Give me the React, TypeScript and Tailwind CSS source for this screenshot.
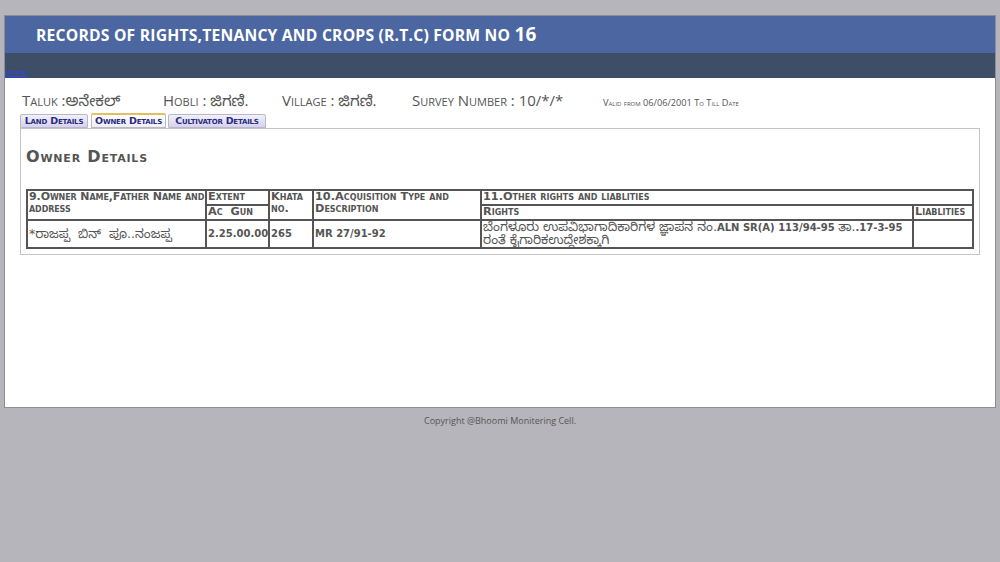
const verdana = "font-['DejaVu_Sans','Noto_Sans_Kannada','Noto_Sans',sans-serif]";
const sans = "font-['Open_Sans','Noto_Sans_Kannada','Noto_Sans',sans-serif]";

const Tab = ({ label, width, active }: { label: string; width: string; active?: boolean }) => (
  <div
    className={`${width} text-center whitespace-nowrap tracking-[-0.2px] border border-[#b8b8c8] text-[#2a2a80] text-[9.5px] font-bold leading-[12px] [font-variant:small-caps] rounded-t-[2px] ${
      active
        ? "h-[15px] border-t-2 border-t-[#e0c060] bg-gradient-to-b from-white to-[#eeeef6]"
        : "h-[14px] bg-gradient-to-b from-[#f2f0fa] to-[#d6d2ee]"
    }`}
  >
    {label}
  </div>
);

const th = "border-2 border-[#555] px-[1px] text-left align-top font-bold text-[11.3px] leading-[12px] text-[#555] [font-variant:small-caps]";
const td = "border-2 border-[#555] px-[1px] align-middle font-bold text-[10px] leading-[12px] text-[#555]";
const kn = "font-normal text-[12.5px]";

export default function App() {
  return (
    <div className={`min-h-[562px] w-full bg-[#b6b5bb] pt-[15px] ${sans}`}>
      <div className="mx-[4px] border border-[#8e8d94] bg-white">
        <div className="h-[37px] bg-[#4b66a0] pl-[31px] flex items-center">
          <h1 className="text-white font-bold text-[15.7px] tracking-[0.2px]">
            RECORDS OF RIGHTS,TENANCY AND CROPS (R.T.C) FORM NO <span className="text-[19px]">16</span>
          </h1>
        </div>
        <div className="h-[25px] bg-[#3d4e66] flex items-end">
          <a href="#" className="text-[8px] leading-[10px] text-[#3344ee] underline pb-[1px]">Home</a>
        </div>
        <div className="h-[329px] px-[15px] pt-[12px]">
          <div className="flex items-baseline text-[#555] text-[15px] leading-[20px] [font-variant:small-caps] pl-[2px]">
            <span className="w-[141px]">Taluk :ಅನೇಕಲ್</span>
            <span className="w-[119px]">Hobli : ಜಿಗಣಿ.</span>
            <span className="w-[130px]">Village : ಜಿಗಣಿ.</span>
            <span className="w-[191px]">Survey Number : 10/*/*</span>
            <span className="text-[9.2px]">Valid from 06/06/2001 To Till Date</span>
          </div>
          <div className={`flex items-end ${verdana}`}>
            <Tab label="Land Details" width="w-[68px]" />
            <div className="w-[3px]" />
            <Tab label="Owner Details" width="w-[75px]" active />
            <div className="w-[2px]" />
            <Tab label="Cultivator Details" width="w-[98px]" />
          </div>
          <div className={`border border-[#c4c4c4] px-[5px] pt-[17px] pb-[5px] ${verdana}`}>
            <h2 className="text-[#555] font-bold text-[16px] leading-[22px] [font-variant:small-caps] tracking-[0.8px] mb-[21px]">
              Owner Details
            </h2>
            <table className="w-full table-fixed border-collapse border-2 border-[#555]">
              <colgroup>
                <col className="w-[179px]" />
                <col className="w-[63px]" />
                <col className="w-[44px]" />
                <col className="w-[168px]" />
                <col />
                <col className="w-[60px]" />
              </colgroup>
              <tbody>
                <tr className="h-[15px]">
                  <th rowSpan={2} className={`${th} whitespace-nowrap text-[11px] tracking-[-0.1px]`}>
                    9.Owner Name,Father Name and
                    <br />
                    address
                  </th>
                  <th className={th}>Extent</th>
                  <th rowSpan={2} className={th}>Khata no.</th>
                  <th rowSpan={2} className={th}>10.Acquisition Type and Description</th>
                  <th colSpan={2} className={th}>11.Other rights and liablities</th>
                </tr>
                <tr className="h-[15px]">
                  <th className={th}>Ac&nbsp;&nbsp;Gun</th>
                  <th className={th}>Rights</th>
                  <th className={th}>Liablities</th>
                </tr>
                <tr className="h-[28px]">
                  <td className={`${td} ${kn}`}>*ರಾಜಪ್ಪ &nbsp;ಬಿನ್ &nbsp;ಪೂ..ನಂಜಪ್ಪ</td>
                  <td className={`${td} whitespace-nowrap`}>2.25.00.00</td>
                  <td className={td}>265</td>
                  <td className={td}>MR 27/91-92</td>
                  <td className={td}>
                    <span className={kn}>ಬೆಂಗಳೂರು ಉಪವಿಭಾಗಾದಿಕಾರಿಗಳ ಜ್ಞಾಪನ ನಂ.</span>ALN SR(A) 113/94-95{" "}
                    <span className={kn}>ತಾ.</span>.17-3-95
                    <br />
                    <span className={kn}>ರಂತೆ ಕೈಗಾರಿಕಉದ್ದೇಶಕ್ಕಾಗಿ</span>
                  </td>
                  <td className={td}></td>
                </tr>
              </tbody>
            </table>
          </div>
        </div>
      </div>
      <p className="text-center text-[#555] text-[9px] mt-[6px]">Copyright @Bhoomi Monitering Cell.</p>
    </div>
  );
}
